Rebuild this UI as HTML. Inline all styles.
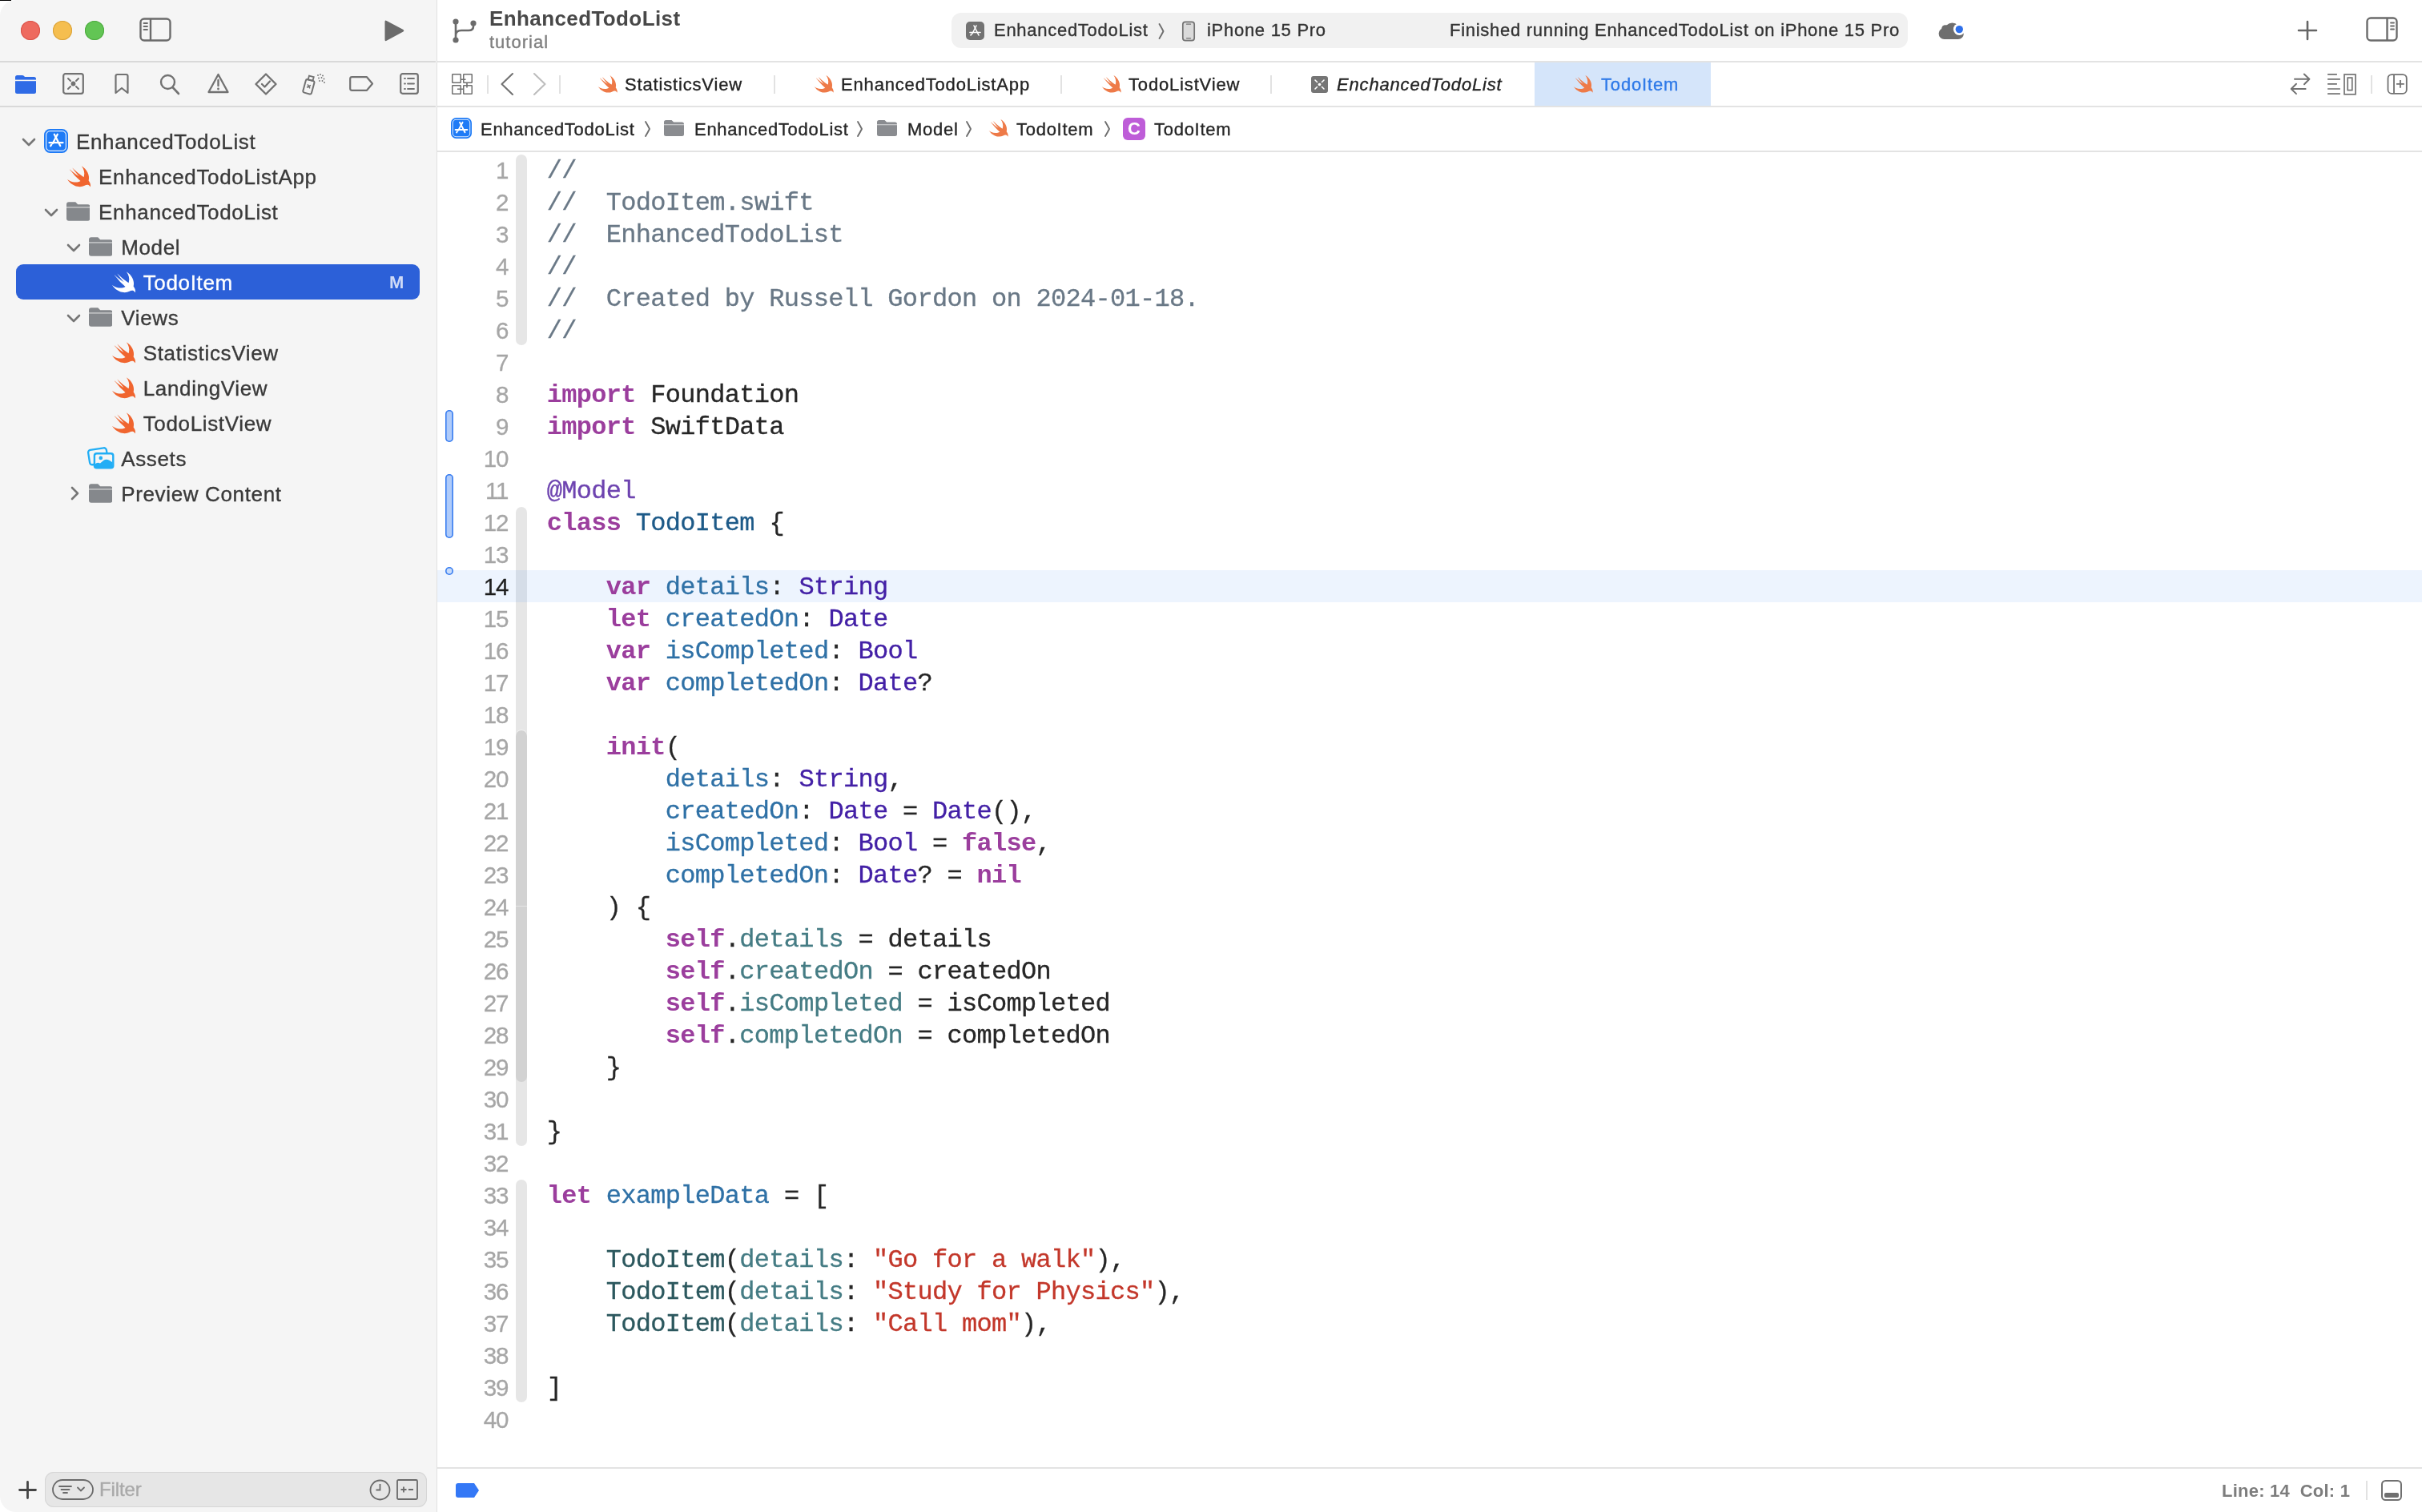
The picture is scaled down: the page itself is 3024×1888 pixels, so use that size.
<!DOCTYPE html><html><head><meta charset="utf-8"><title>Xcode</title><style>
*{margin:0;padding:0;box-sizing:border-box}
html,body{width:3024px;height:1888px;overflow:hidden;background:#fff}
body{position:relative;font-family:"Liberation Sans",sans-serif;color:#262626}
.abs{position:absolute}
.win{position:absolute;left:0;top:0;width:3024px;height:1888px;overflow:hidden;will-change:transform;border-top-left-radius:20px;border-bottom-left-radius:20px;background:#fff}
.side{position:absolute;left:0;top:0;width:545px;height:1888px;background:#F5F5F5}
.vdiv{position:absolute;left:545px;top:0;width:1.2px;height:1888px;background:#E0E0E0}
.hl{position:absolute;height:2px;background:#E3E3E3}
.t{position:absolute;white-space:pre;line-height:44px;height:44px;-webkit-text-stroke:0.35px currentColor}
.srow{font-size:26px;letter-spacing:0.65px;color:#2B2B2B}
.code{position:absolute;left:682.8px;top:194px;font-family:"Liberation Mono",monospace;font-size:32px;letter-spacing:-0.7px;line-height:40px;white-space:pre;color:#262626;-webkit-text-stroke:0.3px currentColor}
.code div{height:40px}
.ln{position:absolute;left:560px;width:74px;top:192.5px;font-size:29.5px;letter-spacing:-1.3px;-webkit-text-stroke:0.3px currentColor;line-height:40px;text-align:right;color:#A6A6A6}
.ln div{height:40px}
.kw{color:#9B3E9D;font-weight:bold;-webkit-text-stroke:0}
.com{color:#697886}
.dec{color:#2F71A6}
.tdec{color:#1D5A88}
.sys{color:#4320A6}
.pp{color:#457C84}
.pt{color:#2C585E}
.str{color:#C3372A}
.mac{color:#6E44B0}
</style></head><body><div class="win"><div class="side"></div><div class="vdiv"></div><div class="hl" style="left:0;top:76px;width:544px;background:#D9D9D9"></div><div class="hl" style="left:546px;top:76px;width:2478px"></div><div class="hl" style="left:0;top:132px;width:544px;background:#D9D9D9"></div><div class="hl" style="left:546px;top:132px;width:2478px"></div><div class="hl" style="left:546px;top:188px;width:2478px"></div><div class="hl" style="left:546px;top:1832px;width:2478px"></div><div class="abs" style="left:25.5px;top:25.5px;width:24px;height:24px;border-radius:50%;background:#EE6A5F;box-shadow:inset 0 0 0 1px #D9534A"></div><div class="abs" style="left:65.5px;top:25.5px;width:24px;height:24px;border-radius:50%;background:#F5BE4F;box-shadow:inset 0 0 0 1px #D9A23B"></div><div class="abs" style="left:105.5px;top:25.5px;width:24px;height:24px;border-radius:50%;background:#62C554;box-shadow:inset 0 0 0 1px #4EAA41"></div><svg class="abs" style="left:174px;top:22px" width="40" height="30" viewBox="0 0 40 30"><rect x="1.5" y="1.5" width="37" height="27" rx="4.5" fill="none" stroke="#6B6B6B" stroke-width="2.4"/><line x1="14" y1="1.5" x2="14" y2="28.5" stroke="#6B6B6B" stroke-width="2.4"/><g stroke="#6B6B6B" stroke-width="1.8" stroke-linecap="round"><line x1="5.5" y1="7" x2="10" y2="7"/><line x1="5.5" y1="11" x2="10" y2="11"/><line x1="5.5" y1="15" x2="10" y2="15"/></g></svg><svg class="abs" style="left:478px;top:24px" width="28" height="29" viewBox="0 0 28 29"><path d="M2.5 3.2 Q2.5 0.8 4.7 2 L25.5 13 Q27.3 14.3 25.5 15.6 L4.7 26.8 Q2.5 28 2.5 25.6 Z" fill="#6B6B6B"/></svg><svg class="abs" style="left:564px;top:22px" width="32" height="33" viewBox="0 0 32 33"><g fill="#6B6B6B"><circle cx="5" cy="5" r="3.6"/><circle cx="5" cy="28" r="3.6"/><circle cx="27" cy="7" r="3.6"/></g><path d="M5 5 V28 M27 7 V11 Q27 16 21 16 H12 Q5 16 5 22" stroke="#6B6B6B" stroke-width="2.6" fill="none"/></svg><div class="t" style="left:611px;top:5px;font-size:26px;line-height:36px;height:36px;font-weight:bold;color:#484848;letter-spacing:0.4px;-webkit-text-stroke:0">EnhancedTodoList</div><div class="t" style="left:611px;top:37.8px;font-size:22px;line-height:30px;height:30px;color:#7F7F7F;letter-spacing:1px">tutorial</div><div class="abs" style="left:1188px;top:16px;width:1194px;height:44px;border-radius:12px;background:#F1F1F1"></div><svg class="abs" style="left:1206px;top:27px" width="23" height="23" viewBox="0 0 23 23"><rect width="23" height="23" rx="5" fill="#727272"/><g stroke="#fff" stroke-width="1.6" stroke-linecap="round" fill="none"><path d="M10 5 L16 17"/><path d="M13 5 L8 15"/><path d="M5 13.5 H18"/><path d="M6 17 L7 15.5"/></g></svg><div class="t" style="left:1241px;top:16px;font-size:22px;line-height:44px;color:#333;letter-spacing:0.72px">EnhancedTodoList</div><svg class="abs" style="left:1444px;top:28px" width="12" height="22" viewBox="0 0 12 22"><path d="M3.5 2 Q6.5 7 8.5 11 Q6.5 15 3.5 20" stroke="#6E6E6E" stroke-width="1.9" stroke-linejoin="round" fill="none" stroke-linecap="round"/></svg><svg class="abs" style="left:1475px;top:26px" width="18" height="26" viewBox="0 0 18 26"><rect x="1.8" y="1.3" width="14.4" height="23.4" rx="3.2" fill="#DADADA" stroke="#727272" stroke-width="1.7"/><path d="M6.5 4.2 H11.5 M6.5 21.8 H11.5" stroke="#727272" stroke-width="1.2" stroke-linecap="round"/></svg><div class="t" style="left:1507px;top:16px;font-size:22px;line-height:44px;color:#333;letter-spacing:0.72px">iPhone 15 Pro</div><div class="t" style="left:1810px;top:16px;font-size:22px;line-height:44px;color:#333;letter-spacing:0.72px">Finished running EnhancedTodoList on iPhone 15 Pro</div><svg class="abs" style="left:2400px;top:10px" width="80" height="56" viewBox="0 0 80 56"><g fill="#6E6E6E"><circle cx="27.6" cy="32" r="7"/><circle cx="28.8" cy="25.8" r="4.6"/><circle cx="37.5" cy="28" r="9.6"/><circle cx="44.8" cy="32" r="7"/><rect x="27.6" y="30" width="17.2" height="9"/></g><circle cx="46.3" cy="26.6" r="7.4" fill="#fff"/><circle cx="46.3" cy="26.6" r="4.7" fill="#2D6FEA"/></svg><svg class="abs" style="left:2868px;top:25px" width="26" height="26" viewBox="0 0 26 26"><path d="M13 2 V24 M2 13 H24" stroke="#666" stroke-width="2.6" stroke-linecap="round"/></svg><svg class="abs" style="left:2954px;top:21px" width="40" height="31" viewBox="0 0 40 31"><rect x="1.5" y="1.5" width="37" height="28" rx="4.5" fill="none" stroke="#6B6B6B" stroke-width="2.4"/><line x1="26.5" y1="1.5" x2="26.5" y2="29.5" stroke="#6B6B6B" stroke-width="2.4"/><g stroke="#6B6B6B" stroke-width="1.8" stroke-linecap="round"><line x1="31" y1="7.5" x2="35" y2="7.5"/><line x1="31" y1="11.5" x2="35" y2="11.5"/><line x1="31" y1="15.5" x2="35" y2="15.5"/></g></svg><svg class="abs" style="left:19px;top:93.5px" width="26" height="23" viewBox="0 0 26 23"><path d="M2.5 0h6.3q1.2 0 2 .8L12 2H23.5A2.5 2.5 0 0 1 26 4.5v16A2.5 2.5 0 0 1 23.5 23H2.5A2.5 2.5 0 0 1 0 20.5V2.5A2.5 2.5 0 0 1 2.5 0z" fill="#2F6BE6"/><rect x="0" y="5.6" width="26" height="1.6" fill="#F5F5F5"/></svg><svg class="abs" style="left:78px;top:91px" width="27" height="27" viewBox="0 0 27 27"><rect x="1.2" y="1.2" width="24.6" height="24.6" rx="2.5" fill="none" stroke="#727272" stroke-width="2.2"/><g stroke="#727272" stroke-width="2" stroke-linecap="round"><path d="M7 7 L10 10 M20 7 L17 10 M7 20 L10 17 M20 20 L17 17"/></g><circle cx="13.5" cy="13.5" r="2.9" fill="#727272"/></svg><svg class="abs" style="left:142px;top:91px" width="20" height="27" viewBox="0 0 20 27"><path d="M4.5 2 H15.5 Q17.5 2 17.5 4 V25 L10 19 L2.5 25 V4 Q2.5 2 4.5 2 Z" fill="none" stroke="#727272" stroke-width="2.2" stroke-linejoin="round"/></svg><svg class="abs" style="left:199px;top:92px" width="26" height="27" viewBox="0 0 26 27"><circle cx="10.5" cy="10.5" r="8.5" fill="none" stroke="#727272" stroke-width="2.4"/><path d="M17 17.5 L24 25" stroke="#727272" stroke-width="2.6" stroke-linecap="round"/></svg><svg class="abs" style="left:259px;top:91px" width="27" height="26" viewBox="0 0 27 26"><path d="M13.5 2 L25.5 24 H1.5 Z" fill="none" stroke="#727272" stroke-width="2.3" stroke-linejoin="round"/><path d="M13.5 9 V16" stroke="#727272" stroke-width="2.4" stroke-linecap="round"/><circle cx="13.5" cy="20" r="1.4" fill="#727272"/></svg><svg class="abs" style="left:318px;top:91px" width="28" height="28" viewBox="0 0 28 28"><path d="M14 1.5 L26.5 14 L14 26.5 L1.5 14 Z" fill="none" stroke="#727272" stroke-width="2.3" stroke-linejoin="round"/><path d="M9 14 L12.5 17.5 L19 10.5" stroke="#727272" stroke-width="2.3" fill="none" stroke-linecap="round" stroke-linejoin="round"/></svg><svg class="abs" style="left:376px;top:91px" width="32" height="28" viewBox="0 0 32 28"><g transform="rotate(15 10 17)"><rect x="4" y="9" width="11" height="17" rx="2" fill="none" stroke="#727272" stroke-width="2"/><rect x="6.5" y="4" width="6" height="5" fill="none" stroke="#727272" stroke-width="1.8"/><path d="M7.5 15 L11.5 19 M11.5 15 L7.5 19" stroke="#727272" stroke-width="1.6"/></g><g fill="#727272"><circle cx="21" cy="3" r="0.9"/><circle cx="24" cy="2" r="0.9"/><circle cx="27" cy="3.5" r="0.9"/><circle cx="22" cy="6.5" r="0.9"/><circle cx="25.5" cy="6" r="0.9"/><circle cx="28.5" cy="7.5" r="0.9"/><circle cx="23" cy="10" r="0.9"/><circle cx="26.5" cy="10" r="0.9"/><circle cx="29" cy="12" r="0.9"/></g></svg><svg class="abs" style="left:436px;top:95px" width="31" height="19" viewBox="0 0 31 19"><path d="M3.5 1.2 H22 L29 9.5 L22 17.8 H3.5 A2.3 2.3 0 0 1 1.2 15.5 V3.5 A2.3 2.3 0 0 1 3.5 1.2 Z" fill="none" stroke="#727272" stroke-width="2.2" stroke-linejoin="round"/></svg><svg class="abs" style="left:499px;top:91px" width="24" height="27" viewBox="0 0 24 27"><rect x="1.2" y="1.2" width="21.6" height="24.6" rx="2.5" fill="none" stroke="#727272" stroke-width="2.2"/><g stroke="#727272" stroke-width="1.8" stroke-linecap="round"><path d="M6 7 H7 M10 7 H18 M6 13.5 H7 M10 13.5 H18 M6 20 H7 M10 20 H18"/></g></svg><svg class="abs" style="left:563px;top:91px" width="28" height="28" viewBox="0 0 28 28"><g fill="none" stroke="#707070" stroke-width="1.5" stroke-linejoin="round"><rect x="1.75" y="1.75" width="10.5" height="10.5" rx="0.6"/><rect x="15.75" y="1.75" width="10.5" height="10.5" rx="0.6"/><rect x="1.75" y="15.75" width="10.5" height="10.5" rx="0.6"/><rect x="15.75" y="15.75" width="10.5" height="10.5" rx="0.6"/></g><g stroke="#707070" stroke-width="1.6"><path d="M12.2 8.2 H18.5 M20 12.2 V18.5 M8 20.2 H15.8"/></g></svg><div class="abs" style="left:608px;top:94px;width:2px;height:23px;background:#E2E2E2"></div><svg class="abs" style="left:623px;top:90px" width="20" height="30" viewBox="0 0 20 30"><path d="M17 2 L3.5 15 L17 28" stroke="#727272" stroke-width="2.1" fill="none" stroke-linecap="round" stroke-linejoin="round"/></svg><svg class="abs" style="left:664px;top:90px" width="20" height="30" viewBox="0 0 20 30"><path d="M3 2 L16.5 15 L3 28" stroke="#BDBDBD" stroke-width="2.1" fill="none" stroke-linecap="round" stroke-linejoin="round"/></svg><div class="abs" style="left:698px;top:94px;width:2px;height:23px;background:#E2E2E2"></div><div class="abs" style="left:1916px;top:78px;width:220px;height:54px;background:#D5E5FA"></div><svg style="position:absolute;left:744px;top:93px" width="28" height="28" viewBox="0.5 2.6 21 21"><path fill="#EE7A48" d="M13.543 3.41c4.114 2.47 6.545 7.162 5.549 11.131-.024.093-.05.181-.076.272l.002.001c2.062 2.538 1.5 5.258 1.236 4.745-1.072-2.086-3.066-1.568-4.088-1.043a6.803 6.803 0 0 1-.281.158l-.02.012-.002.002c-2.115 1.123-4.957 1.205-7.812-.022a12.568 12.568 0 0 1-5.64-4.838c.649.48 1.35.902 2.097 1.252 3.019 1.414 6.051 1.311 8.197-.002C9.651 12.73 7.101 9.67 5.146 7.191a10.628 10.628 0 0 1-1.005-1.384c2.34 2.142 6.038 4.830 7.365 5.576C8.69 8.408 6.208 4.743 6.324 4.86c4.436 4.47 8.528 6.996 8.528 6.996.154.085.27.154.36.213.085-.215.16-.437.224-.668.708-2.588-.09-5.548-1.893-7.992z"/></svg><div class="t" style="left:780px;top:82.7px;font-size:22px;line-height:46px;height:46px;color:#242424;letter-spacing:0.83px;">StatisticsView</div><div class="abs" style="left:966px;top:94px;width:2px;height:23px;background:#E2E2E2"></div><svg style="position:absolute;left:1014px;top:93px" width="28" height="28" viewBox="0.5 2.6 21 21"><path fill="#EE7A48" d="M13.543 3.41c4.114 2.47 6.545 7.162 5.549 11.131-.024.093-.05.181-.076.272l.002.001c2.062 2.538 1.5 5.258 1.236 4.745-1.072-2.086-3.066-1.568-4.088-1.043a6.803 6.803 0 0 1-.281.158l-.02.012-.002.002c-2.115 1.123-4.957 1.205-7.812-.022a12.568 12.568 0 0 1-5.64-4.838c.649.48 1.35.902 2.097 1.252 3.019 1.414 6.051 1.311 8.197-.002C9.651 12.73 7.101 9.67 5.146 7.191a10.628 10.628 0 0 1-1.005-1.384c2.34 2.142 6.038 4.830 7.365 5.576C8.69 8.408 6.208 4.743 6.324 4.86c4.436 4.47 8.528 6.996 8.528 6.996.154.085.27.154.36.213.085-.215.16-.437.224-.668.708-2.588-.09-5.548-1.893-7.992z"/></svg><div class="t" style="left:1050px;top:82.7px;font-size:22px;line-height:46px;height:46px;color:#242424;letter-spacing:0.83px;">EnhancedTodoListApp</div><div class="abs" style="left:1324px;top:94px;width:2px;height:23px;background:#E2E2E2"></div><svg style="position:absolute;left:1373px;top:93px" width="28" height="28" viewBox="0.5 2.6 21 21"><path fill="#EE7A48" d="M13.543 3.41c4.114 2.47 6.545 7.162 5.549 11.131-.024.093-.05.181-.076.272l.002.001c2.062 2.538 1.5 5.258 1.236 4.745-1.072-2.086-3.066-1.568-4.088-1.043a6.803 6.803 0 0 1-.281.158l-.02.012-.002.002c-2.115 1.123-4.957 1.205-7.812-.022a12.568 12.568 0 0 1-5.64-4.838c.649.48 1.35.902 2.097 1.252 3.019 1.414 6.051 1.311 8.197-.002C9.651 12.73 7.101 9.67 5.146 7.191a10.628 10.628 0 0 1-1.005-1.384c2.34 2.142 6.038 4.830 7.365 5.576C8.69 8.408 6.208 4.743 6.324 4.86c4.436 4.47 8.528 6.996 8.528 6.996.154.085.27.154.36.213.085-.215.16-.437.224-.668.708-2.588-.09-5.548-1.893-7.992z"/></svg><div class="t" style="left:1409px;top:82.7px;font-size:22px;line-height:46px;height:46px;color:#242424;letter-spacing:0.83px;">TodoListView</div><div class="abs" style="left:1586px;top:94px;width:2px;height:23px;background:#E2E2E2"></div><svg class="abs" style="left:1637px;top:95px" width="21" height="21" viewBox="0 0 21 21"><rect width="21" height="21" rx="3" fill="#757575"/><g stroke="#fff" stroke-width="1.6" stroke-linecap="round"><path d="M5 5 L7.5 7.5 M16 5 L13.5 7.5 M5 16 L7.5 13.5 M16 16 L13.5 13.5"/></g><circle cx="10.5" cy="10.5" r="1.8" fill="#fff"/></svg><div class="t" style="left:1669px;top:82.7px;font-size:22px;line-height:46px;height:46px;color:#242424;letter-spacing:0.83px;font-style:italic;">EnchancedTodoList</div><svg style="position:absolute;left:1962px;top:93px" width="28" height="28" viewBox="0.5 2.6 21 21"><path fill="#EE7A48" d="M13.543 3.41c4.114 2.47 6.545 7.162 5.549 11.131-.024.093-.05.181-.076.272l.002.001c2.062 2.538 1.5 5.258 1.236 4.745-1.072-2.086-3.066-1.568-4.088-1.043a6.803 6.803 0 0 1-.281.158l-.02.012-.002.002c-2.115 1.123-4.957 1.205-7.812-.022a12.568 12.568 0 0 1-5.64-4.838c.649.48 1.35.902 2.097 1.252 3.019 1.414 6.051 1.311 8.197-.002C9.651 12.73 7.101 9.67 5.146 7.191a10.628 10.628 0 0 1-1.005-1.384c2.34 2.142 6.038 4.830 7.365 5.576C8.69 8.408 6.208 4.743 6.324 4.86c4.436 4.47 8.528 6.996 8.528 6.996.154.085.27.154.36.213.085-.215.16-.437.224-.668.708-2.588-.09-5.548-1.893-7.992z"/></svg><div class="t" style="left:1999px;top:82.7px;font-size:22px;line-height:46px;height:46px;color:#2F7AE8;letter-spacing:0.83px;">TodoItem</div><svg class="abs" style="left:2857px;top:91px" width="28" height="28" viewBox="0 0 28 28"><g stroke="#727272" stroke-width="2" fill="none" stroke-linecap="round" stroke-linejoin="round"><path d="M8 7.8 H26.4 M19.8 1.6 L26.4 7.7 L20 14.3"/><path d="M3.8 20 H21.6 M10 13.8 L3.7 20 L10 26.1"/></g></svg><svg class="abs" style="left:2905px;top:91px" width="38" height="28" viewBox="0 0 38 28"><g stroke="#727272" stroke-width="1.7" fill="none"><path d="M1.1 1.9 H12.9 M1.1 7.8 H16.9 M1.1 13.9 H12.9 M1.1 20 H16.9 M1.1 26.1 H16.9"/><rect x="22" y="2" width="14" height="24.8"/><rect x="26.2" y="6.1" width="5.6" height="15.5"/></g></svg><div class="abs" style="left:2960px;top:94px;width:2px;height:23px;background:#E2E2E2"></div><svg class="abs" style="left:2979px;top:91px" width="28" height="28" viewBox="0 0 28 28"><rect x="2.5" y="2.1" width="23.3" height="23.7" rx="4.8" fill="none" stroke="#727272" stroke-width="1.8"/><path d="M10 2.1 V25.8" stroke="#727272" stroke-width="1.8"/><path d="M17.9 9 V18.8 M13 13.9 H22.8" stroke="#727272" stroke-width="1.8"/></svg><svg style="position:absolute;left:563px;top:147px" width="26" height="26" viewBox="0 0 30 30"><rect x="0" y="0" width="30" height="30" rx="7.5" fill="#1F7BF6"/><rect x="2.6" y="2.6" width="24.8" height="24.8" rx="5" fill="none" stroke="#ffffff" stroke-width="1.2" opacity="0.85"/><g stroke="#ffffff" stroke-width="2.3" stroke-linecap="round" fill="none"><path d="M12.8 6.8 L20.2 21"/><path d="M16.8 6.8 L10.8 18"/><path d="M6.5 17.2 H23.5"/><path d="M8.2 21.2 L9.2 19.6"/></g></svg><div class="t" style="left:600px;top:139.4px;font-size:22px;line-height:46px;height:46px;color:#262626;letter-spacing:0.72px">EnhancedTodoList</div><svg class="abs" style="left:804px;top:150px" width="9" height="22" viewBox="0 0 9 22"><path d="M2 2 Q5 7 7 11 Q5 15 2 20" stroke="#6E6E6E" stroke-width="1.9" fill="none" stroke-linecap="round" stroke-linejoin="round"/></svg><svg style="position:absolute;left:829px;top:150px" width="25" height="20" viewBox="0 0 30 24"><path fill="#8A8C90" d="M3 0h8.5l3 3H27a3 3 0 0 1 3 3v15a3 3 0 0 1-3 3H3a3 3 0 0 1-3-3V3a3 3 0 0 1 3-3z"/><rect x="0" y="6" width="30" height="1.6" fill="#F5F5F5" opacity="0.55"/></svg><div class="t" style="left:867px;top:139.4px;font-size:22px;line-height:46px;height:46px;color:#262626;letter-spacing:0.72px">EnhancedTodoList</div><svg class="abs" style="left:1069px;top:150px" width="9" height="22" viewBox="0 0 9 22"><path d="M2 2 Q5 7 7 11 Q5 15 2 20" stroke="#6E6E6E" stroke-width="1.9" fill="none" stroke-linecap="round" stroke-linejoin="round"/></svg><svg style="position:absolute;left:1095px;top:150px" width="25" height="20" viewBox="0 0 30 24"><path fill="#8A8C90" d="M3 0h8.5l3 3H27a3 3 0 0 1 3 3v15a3 3 0 0 1-3 3H3a3 3 0 0 1-3-3V3a3 3 0 0 1 3-3z"/><rect x="0" y="6" width="30" height="1.6" fill="#F5F5F5" opacity="0.55"/></svg><div class="t" style="left:1133px;top:139.4px;font-size:22px;line-height:46px;height:46px;color:#262626;letter-spacing:0.72px">Model</div><svg class="abs" style="left:1205px;top:150px" width="9" height="22" viewBox="0 0 9 22"><path d="M2 2 Q5 7 7 11 Q5 15 2 20" stroke="#6E6E6E" stroke-width="1.9" fill="none" stroke-linecap="round" stroke-linejoin="round"/></svg><svg style="position:absolute;left:1232px;top:148px" width="28" height="28" viewBox="0.5 2.6 21 21"><path fill="#EE7A48" d="M13.543 3.41c4.114 2.47 6.545 7.162 5.549 11.131-.024.093-.05.181-.076.272l.002.001c2.062 2.538 1.5 5.258 1.236 4.745-1.072-2.086-3.066-1.568-4.088-1.043a6.803 6.803 0 0 1-.281.158l-.02.012-.002.002c-2.115 1.123-4.957 1.205-7.812-.022a12.568 12.568 0 0 1-5.64-4.838c.649.48 1.35.902 2.097 1.252 3.019 1.414 6.051 1.311 8.197-.002C9.651 12.73 7.101 9.67 5.146 7.191a10.628 10.628 0 0 1-1.005-1.384c2.34 2.142 6.038 4.830 7.365 5.576C8.69 8.408 6.208 4.743 6.324 4.86c4.436 4.47 8.528 6.996 8.528 6.996.154.085.27.154.36.213.085-.215.16-.437.224-.668.708-2.588-.09-5.548-1.893-7.992z"/></svg><div class="t" style="left:1269px;top:139.4px;font-size:22px;line-height:46px;height:46px;color:#262626;letter-spacing:0.72px">TodoItem</div><svg class="abs" style="left:1378px;top:150px" width="9" height="22" viewBox="0 0 9 22"><path d="M2 2 Q5 7 7 11 Q5 15 2 20" stroke="#6E6E6E" stroke-width="1.9" fill="none" stroke-linecap="round" stroke-linejoin="round"/></svg><div class="abs" style="left:1402px;top:147px;width:28px;height:28px;border-radius:6px;background:#BE5DD8;color:#fff;font-size:22px;font-weight:bold;line-height:28px;text-align:center">C</div><div class="t" style="left:1441px;top:139.4px;font-size:22px;line-height:46px;height:46px;color:#262626;letter-spacing:0.72px">TodoItem</div><svg style="position:absolute;left:27px;top:171.5px" width="18" height="12" viewBox="0 0 18 12"><path d="M2 2 L9 9 L16 2" stroke="#767676" stroke-width="2.6" fill="none" stroke-linecap="round" stroke-linejoin="round"/></svg><svg style="position:absolute;left:54.5px;top:161px" width="30" height="30" viewBox="0 0 30 30"><rect x="0" y="0" width="30" height="30" rx="7.5" fill="#1F7BF6"/><rect x="2.6" y="2.6" width="24.8" height="24.8" rx="5" fill="none" stroke="#ffffff" stroke-width="1.2" opacity="0.85"/><g stroke="#ffffff" stroke-width="2.3" stroke-linecap="round" fill="none"><path d="M12.8 6.8 L20.2 21"/><path d="M16.8 6.8 L10.8 18"/><path d="M6.5 17.2 H23.5"/><path d="M8.2 21.2 L9.2 19.6"/></g></svg><div class="t srow" style="left:95.0px;top:155.3px;color:#3A3A3A">EnhancedTodoList</div><svg style="position:absolute;left:81px;top:205.5px" width="33.6" height="33.6" viewBox="0.5 2.6 21 21"><path fill="#F0652F" d="M13.543 3.41c4.114 2.47 6.545 7.162 5.549 11.131-.024.093-.05.181-.076.272l.002.001c2.062 2.538 1.5 5.258 1.236 4.745-1.072-2.086-3.066-1.568-4.088-1.043a6.803 6.803 0 0 1-.281.158l-.02.012-.002.002c-2.115 1.123-4.957 1.205-7.812-.022a12.568 12.568 0 0 1-5.64-4.838c.649.48 1.35.902 2.097 1.252 3.019 1.414 6.051 1.311 8.197-.002C9.651 12.73 7.101 9.67 5.146 7.191a10.628 10.628 0 0 1-1.005-1.384c2.34 2.142 6.038 4.830 7.365 5.576C8.69 8.408 6.208 4.743 6.324 4.86c4.436 4.47 8.528 6.996 8.528 6.996.154.085.27.154.36.213.085-.215.16-.437.224-.668.708-2.588-.09-5.548-1.893-7.992z"/></svg><div class="t srow" style="left:123.10000000000001px;top:199.3px;color:#3A3A3A">EnhancedTodoListApp</div><svg style="position:absolute;left:55px;top:259.5px" width="18" height="12" viewBox="0 0 18 12"><path d="M2 2 L9 9 L16 2" stroke="#767676" stroke-width="2.6" fill="none" stroke-linecap="round" stroke-linejoin="round"/></svg><svg style="position:absolute;left:83px;top:252px" width="29.4" height="24" viewBox="0 0 30 24"><path fill="#85888C" d="M3 0h8.5l3 3H27a3 3 0 0 1 3 3v15a3 3 0 0 1-3 3H3a3 3 0 0 1-3-3V3a3 3 0 0 1 3-3z"/><rect x="0" y="6" width="30" height="1.6" fill="#F5F5F5" opacity="0.55"/></svg><div class="t srow" style="left:123.10000000000001px;top:243.3px;color:#3A3A3A">EnhancedTodoList</div><svg style="position:absolute;left:83px;top:303.5px" width="18" height="12" viewBox="0 0 18 12"><path d="M2 2 L9 9 L16 2" stroke="#767676" stroke-width="2.6" fill="none" stroke-linecap="round" stroke-linejoin="round"/></svg><svg style="position:absolute;left:111px;top:296px" width="29.4" height="24" viewBox="0 0 30 24"><path fill="#85888C" d="M3 0h8.5l3 3H27a3 3 0 0 1 3 3v15a3 3 0 0 1-3 3H3a3 3 0 0 1-3-3V3a3 3 0 0 1 3-3z"/><rect x="0" y="6" width="30" height="1.6" fill="#F5F5F5" opacity="0.55"/></svg><div class="t srow" style="left:151.20000000000002px;top:287.3px;color:#3A3A3A">Model</div><div class="abs" style="left:20px;top:330px;width:504px;height:44px;border-radius:9px;background:#2C60D8"></div><svg style="position:absolute;left:137px;top:337.5px" width="33.6" height="33.6" viewBox="0.5 2.6 21 21"><path fill="#fff" d="M13.543 3.41c4.114 2.47 6.545 7.162 5.549 11.131-.024.093-.05.181-.076.272l.002.001c2.062 2.538 1.5 5.258 1.236 4.745-1.072-2.086-3.066-1.568-4.088-1.043a6.803 6.803 0 0 1-.281.158l-.02.012-.002.002c-2.115 1.123-4.957 1.205-7.812-.022a12.568 12.568 0 0 1-5.64-4.838c.649.48 1.35.902 2.097 1.252 3.019 1.414 6.051 1.311 8.197-.002C9.651 12.73 7.101 9.67 5.146 7.191a10.628 10.628 0 0 1-1.005-1.384c2.34 2.142 6.038 4.830 7.365 5.576C8.69 8.408 6.208 4.743 6.324 4.86c4.436 4.47 8.528 6.996 8.528 6.996.154.085.27.154.36.213.085-.215.16-.437.224-.668.708-2.588-.09-5.548-1.893-7.992z"/></svg><div class="t srow" style="left:178.70000000000002px;top:331.3px;color:#fff">TodoItem</div><div class="t" style="left:486px;top:331px;font-size:22px;font-weight:bold;color:#CFDAF6;-webkit-text-stroke:0">M</div><svg style="position:absolute;left:83px;top:391.5px" width="18" height="12" viewBox="0 0 18 12"><path d="M2 2 L9 9 L16 2" stroke="#767676" stroke-width="2.6" fill="none" stroke-linecap="round" stroke-linejoin="round"/></svg><svg style="position:absolute;left:111px;top:384px" width="29.4" height="24" viewBox="0 0 30 24"><path fill="#85888C" d="M3 0h8.5l3 3H27a3 3 0 0 1 3 3v15a3 3 0 0 1-3 3H3a3 3 0 0 1-3-3V3a3 3 0 0 1 3-3z"/><rect x="0" y="6" width="30" height="1.6" fill="#F5F5F5" opacity="0.55"/></svg><div class="t srow" style="left:151.20000000000002px;top:375.3px;color:#3A3A3A">Views</div><svg style="position:absolute;left:137px;top:425.5px" width="33.6" height="33.6" viewBox="0.5 2.6 21 21"><path fill="#F0652F" d="M13.543 3.41c4.114 2.47 6.545 7.162 5.549 11.131-.024.093-.05.181-.076.272l.002.001c2.062 2.538 1.5 5.258 1.236 4.745-1.072-2.086-3.066-1.568-4.088-1.043a6.803 6.803 0 0 1-.281.158l-.02.012-.002.002c-2.115 1.123-4.957 1.205-7.812-.022a12.568 12.568 0 0 1-5.64-4.838c.649.48 1.35.902 2.097 1.252 3.019 1.414 6.051 1.311 8.197-.002C9.651 12.73 7.101 9.67 5.146 7.191a10.628 10.628 0 0 1-1.005-1.384c2.34 2.142 6.038 4.830 7.365 5.576C8.69 8.408 6.208 4.743 6.324 4.86c4.436 4.47 8.528 6.996 8.528 6.996.154.085.27.154.36.213.085-.215.16-.437.224-.668.708-2.588-.09-5.548-1.893-7.992z"/></svg><div class="t srow" style="left:178.70000000000002px;top:419.3px;color:#3A3A3A">StatisticsView</div><svg style="position:absolute;left:137px;top:469.5px" width="33.6" height="33.6" viewBox="0.5 2.6 21 21"><path fill="#F0652F" d="M13.543 3.41c4.114 2.47 6.545 7.162 5.549 11.131-.024.093-.05.181-.076.272l.002.001c2.062 2.538 1.5 5.258 1.236 4.745-1.072-2.086-3.066-1.568-4.088-1.043a6.803 6.803 0 0 1-.281.158l-.02.012-.002.002c-2.115 1.123-4.957 1.205-7.812-.022a12.568 12.568 0 0 1-5.64-4.838c.649.48 1.35.902 2.097 1.252 3.019 1.414 6.051 1.311 8.197-.002C9.651 12.73 7.101 9.67 5.146 7.191a10.628 10.628 0 0 1-1.005-1.384c2.34 2.142 6.038 4.830 7.365 5.576C8.69 8.408 6.208 4.743 6.324 4.86c4.436 4.47 8.528 6.996 8.528 6.996.154.085.27.154.36.213.085-.215.16-.437.224-.668.708-2.588-.09-5.548-1.893-7.992z"/></svg><div class="t srow" style="left:178.70000000000002px;top:463.3px;color:#3A3A3A">LandingView</div><svg style="position:absolute;left:137px;top:513.5px" width="33.6" height="33.6" viewBox="0.5 2.6 21 21"><path fill="#F0652F" d="M13.543 3.41c4.114 2.47 6.545 7.162 5.549 11.131-.024.093-.05.181-.076.272l.002.001c2.062 2.538 1.5 5.258 1.236 4.745-1.072-2.086-3.066-1.568-4.088-1.043a6.803 6.803 0 0 1-.281.158l-.02.012-.002.002c-2.115 1.123-4.957 1.205-7.812-.022a12.568 12.568 0 0 1-5.64-4.838c.649.48 1.35.902 2.097 1.252 3.019 1.414 6.051 1.311 8.197-.002C9.651 12.73 7.101 9.67 5.146 7.191a10.628 10.628 0 0 1-1.005-1.384c2.34 2.142 6.038 4.830 7.365 5.576C8.69 8.408 6.208 4.743 6.324 4.86c4.436 4.47 8.528 6.996 8.528 6.996.154.085.27.154.36.213.085-.215.16-.437.224-.668.708-2.588-.09-5.548-1.893-7.992z"/></svg><div class="t srow" style="left:178.70000000000002px;top:507.3px;color:#3A3A3A">TodoListView</div><svg class="abs" style="left:108px;top:557px" width="36" height="30" viewBox="0 0 36 30"><g transform="rotate(-9 14 13)"><rect x="3" y="3.6" width="23" height="18.5" rx="3" fill="none" stroke="#22AEF5" stroke-width="2.3"/></g><rect x="9.9" y="9.3" width="23.4" height="18" rx="2.8" fill="#F5F5F5" stroke="#22AEF5" stroke-width="2.4"/><path d="M10.6 27 V22.5 Q13.5 19.6 17 21.6 L21.5 17.8 Q26 14.8 32.6 20.6 V27 Z" fill="#22AEF5"/><circle cx="17.8" cy="14.9" r="2.3" fill="#22AEF5"/></svg><div class="t srow" style="left:151.20000000000002px;top:551.3px;color:#3A3A3A">Assets</div><svg style="position:absolute;left:88px;top:606.8px" width="12" height="18" viewBox="0 0 12 18"><path d="M2 2 L9 9 L2 16" stroke="#767676" stroke-width="2.6" fill="none" stroke-linecap="round" stroke-linejoin="round"/></svg><svg style="position:absolute;left:111px;top:604px" width="29.4" height="24" viewBox="0 0 30 24"><path fill="#85888C" d="M3 0h8.5l3 3H27a3 3 0 0 1 3 3v15a3 3 0 0 1-3 3H3a3 3 0 0 1-3-3V3a3 3 0 0 1 3-3z"/><rect x="0" y="6" width="30" height="1.6" fill="#F5F5F5" opacity="0.55"/></svg><div class="t srow" style="left:151.20000000000002px;top:595.3px;color:#3A3A3A">Preview Content</div><svg class="abs" style="left:23px;top:1849px" width="23" height="23" viewBox="0 0 23 23"><path d="M11.5 1.5 V21.5 M1.5 11.5 H21.5" stroke="#444" stroke-width="2.8" stroke-linecap="round"/></svg><div class="abs" style="left:56px;top:1838px;width:477px;height:44px;border-radius:11px;background:#E6E6E6;box-shadow:inset 0 0 0 1px #D6D6D6"></div><svg class="abs" style="left:65px;top:1847px" width="52" height="26" viewBox="0 0 52 26"><rect x="1" y="1" width="50" height="24" rx="12" fill="none" stroke="#6A6A6A" stroke-width="1.8"/><g stroke="#6A6A6A" stroke-width="1.8" stroke-linecap="round"><path d="M9 9 H24 M11.5 13 H21.5 M14 17 H19"/><path d="M32 10.5 L36 14.5 L40 10.5" fill="none"/></g></svg><div class="t" style="left:124px;top:1838px;font-size:24px;line-height:44px;color:#A9A9A9;letter-spacing:-0.1px">Filter</div><svg class="abs" style="left:461px;top:1847px" width="27" height="27" viewBox="0 0 27 27"><circle cx="13.5" cy="13.5" r="12" fill="none" stroke="#6A6A6A" stroke-width="1.8"/><path d="M13.5 6 V13.5 H8.5" fill="none" stroke="#6A6A6A" stroke-width="1.8"/></svg><svg class="abs" style="left:495px;top:1847px" width="27" height="26" viewBox="0 0 27 26"><rect x="1" y="1" width="25" height="24" rx="1.5" fill="none" stroke="#6A6A6A" stroke-width="1.8"/><path d="M5.5 13 H12.5 M9 9.5 V16.5 M15 13 H21" stroke="#6A6A6A" stroke-width="1.8"/></svg><svg class="abs" style="left:568px;top:1851px" width="31" height="20" viewBox="0 0 31 20"><path d="M4 1 H24 L30 10 L24 19 H4 A3 3 0 0 1 1 16 V4 A3 3 0 0 1 4 1 Z" fill="#3478F6"/></svg><div class="t" style="left:2774px;top:1840px;font-size:22px;line-height:44px;color:#7D7D7D;font-weight:bold;letter-spacing:0.23px;-webkit-text-stroke:0">Line: 14  Col: 1</div><div class="abs" style="left:2954px;top:1849px;width:2px;height:24px;background:#E2E2E2"></div><svg class="abs" style="left:2973px;top:1848px" width="26" height="26" viewBox="0 0 26 26"><rect x="1" y="1" width="24" height="24" rx="4.5" fill="none" stroke="#707070" stroke-width="2"/><rect x="4" y="16" width="18" height="6" rx="2" fill="#707070"/></svg><div class="abs" style="left:546px;top:712px;width:2478px;height:40px;background:#EDF4FE"></div><div class="abs" style="left:644px;top:193px;width:14px;height:238px;border-radius:7px;background:#E6E6E6"></div><div class="abs" style="left:644px;top:633px;width:14px;height:798px;border-radius:7px;background:#E6E6E6"></div><div class="abs" style="left:644px;top:1473px;width:14px;height:278px;border-radius:7px;background:#E6E6E6"></div><div class="abs" style="left:644px;top:912px;width:14px;height:219px;border-radius:7px 7px 0 0;background:#D2D2D2;box-shadow:0 -1px 0 #F2F2F2"></div><div class="abs" style="left:644px;top:1132px;width:14px;height:219px;border-radius:0 0 7px 7px;background:#D2D2D2"></div><div class="abs" style="left:644px;top:712px;width:14px;height:40px;background:#D5DDE8"></div><div class="abs" style="left:556px;top:512px;width:10px;height:40px;border-radius:5px;background:#AFCBFA;box-shadow:inset 0 0 0 1.6px #3A7EF0"></div><div class="abs" style="left:556px;top:592px;width:10px;height:80px;border-radius:5px;background:#AFCBFA;box-shadow:inset 0 0 0 1.6px #3A7EF0"></div><div class="abs" style="left:556px;top:708px;width:10px;height:10px;border-radius:50%;background:#C7DBFB;box-shadow:inset 0 0 0 1.6px #3A7EF0"></div><div class="ln"><div>1</div><div>2</div><div>3</div><div>4</div><div>5</div><div>6</div><div>7</div><div>8</div><div>9</div><div>10</div><div>11</div><div>12</div><div>13</div><div style="color:#1E1E1E">14</div><div>15</div><div>16</div><div>17</div><div>18</div><div>19</div><div>20</div><div>21</div><div>22</div><div>23</div><div>24</div><div>25</div><div>26</div><div>27</div><div>28</div><div>29</div><div>30</div><div>31</div><div>32</div><div>33</div><div>34</div><div>35</div><div>36</div><div>37</div><div>38</div><div>39</div><div>40</div></div><div class="code"><div><span class="com">//</span></div><div><span class="com">//  TodoItem.swift</span></div><div><span class="com">//  EnhancedTodoList</span></div><div><span class="com">//</span></div><div><span class="com">//  Created by Russell Gordon on 2024-01-18.</span></div><div><span class="com">//</span></div><div></div><div><span class="kw">import</span> Foundation</div><div><span class="kw">import</span> SwiftData</div><div></div><div><span class="mac">@Model</span></div><div><span class="kw">class</span> <span class="tdec">TodoItem</span> {</div><div></div><div>    <span class="kw">var</span> <span class="dec">details</span>: <span class="sys">String</span></div><div>    <span class="kw">let</span> <span class="dec">createdOn</span>: <span class="sys">Date</span></div><div>    <span class="kw">var</span> <span class="dec">isCompleted</span>: <span class="sys">Bool</span></div><div>    <span class="kw">var</span> <span class="dec">completedOn</span>: <span class="sys">Date</span>?</div><div></div><div>    <span class="kw">init</span>(</div><div>        <span class="dec">details</span>: <span class="sys">String</span>,</div><div>        <span class="dec">createdOn</span>: <span class="sys">Date</span> = <span class="sys">Date</span>(),</div><div>        <span class="dec">isCompleted</span>: <span class="sys">Bool</span> = <span class="kw">false</span>,</div><div>        <span class="dec">completedOn</span>: <span class="sys">Date</span>? = <span class="kw">nil</span></div><div>    ) {</div><div>        <span class="kw">self</span>.<span class="pp">details</span> = details</div><div>        <span class="kw">self</span>.<span class="pp">createdOn</span> = createdOn</div><div>        <span class="kw">self</span>.<span class="pp">isCompleted</span> = isCompleted</div><div>        <span class="kw">self</span>.<span class="pp">completedOn</span> = completedOn</div><div>    }</div><div></div><div>}</div><div></div><div><span class="kw">let</span> <span class="dec">exampleData</span> = [</div><div></div><div>    <span class="pt">TodoItem</span>(<span class="pp">details</span>: <span class="str">&quot;Go for a walk&quot;</span>),</div><div>    <span class="pt">TodoItem</span>(<span class="pp">details</span>: <span class="str">&quot;Study for Physics&quot;</span>),</div><div>    <span class="pt">TodoItem</span>(<span class="pp">details</span>: <span class="str">&quot;Call mom&quot;</span>),</div><div></div><div>]</div><div></div></div></div><div class="abs" style="left:0;top:0;width:14px;height:1px;background:#000"></div></body></html>
